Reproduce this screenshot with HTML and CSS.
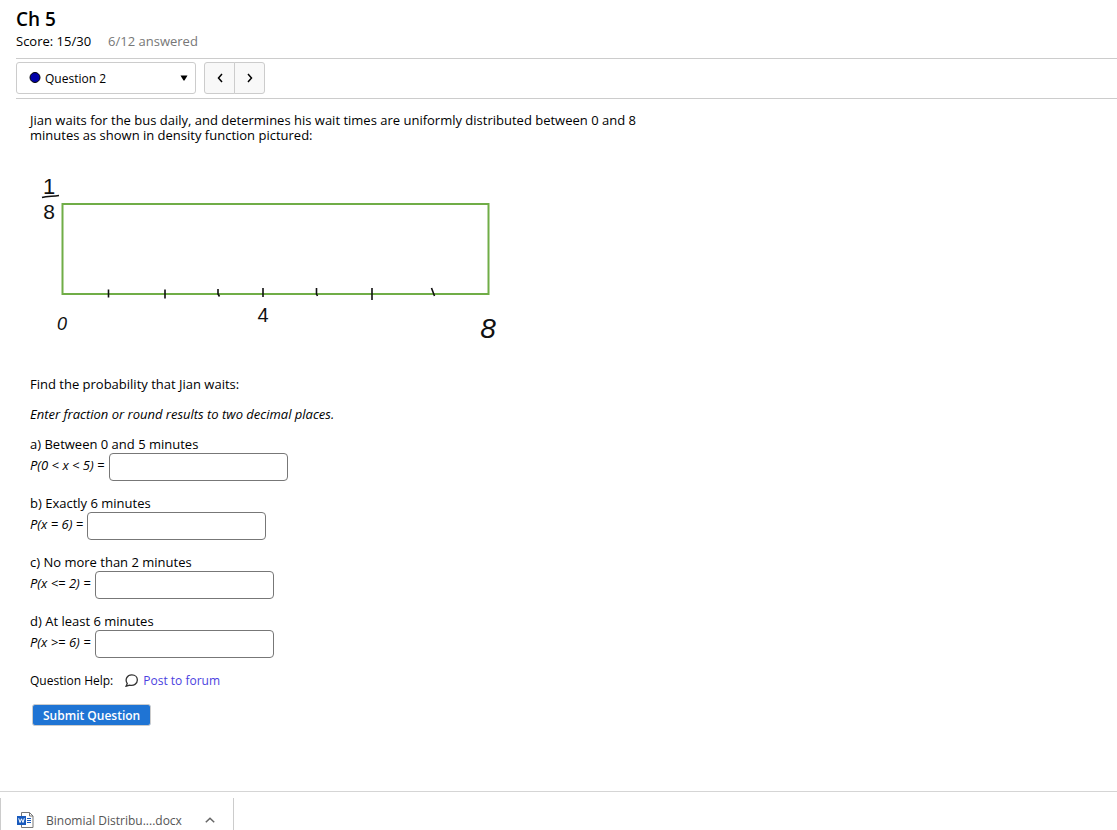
FILE: index.html
```html
<!DOCTYPE html>
<html lang="en">
<head>
<meta charset="UTF-8">
<meta name="viewport" content="width=device-width, initial-scale=1.0">
<title>Ch 5</title>
<link rel="stylesheet" href="styles.css">
</head>
<body>
    <main class="assess">
        <h1>Ch 5</h1>
        <div class="score">
            <span>Score: 15/30</span>
            <span class="answered">6/12 answered</span>
        </div>

        <div class="question-nav">
            <div class="question-select">
                <svg class="dot" width="12" height="12" viewBox="0 0 12 12"><circle cx="6" cy="5.500" r="5" fill="#0000a8" stroke="#000" /></svg>
                <select aria-label="Question">
                    <option>Question 2</option>
                </select>
                <svg class="arrow" width="8" height="6" viewBox="0 0 8 6"><path d="M.5 .5h7L4.500 5.500h-1z" /></svg>
            </div>
            <div class="nav-buttons">
                <button type="button" aria-label="Previous question"><svg width="6" height="10" viewBox="0 0 6 10"><path d="M5 1L1.500 5L5 9" /></svg></button>
                <button type="button" aria-label="Next question"><svg width="6" height="10" viewBox="0 0 6 10"><path d="M1 1L4.500 5L1 9" /></svg></button>
            </div>
        </div>

        <form class="question">
            <p class="intro">Jian waits for the bus daily, and determines his wait times are uniformly distributed between 0 and 8 minutes as shown in density function pictured:</p>

            <!-- density function, height 1/8 from 0 to 8 -->
            <svg class="graph" width="480" height="190" viewBox="0 0 480 190">
                <rect x="32.500" y="44" width="426" height="90" class="density" />
                <g class="ticks">
                    <path d="M78.500 129.500v8M135 129.500v9M188 129v5l1.500 2.500M233 128v9M286.500 128v6l1 2M342 128v12M401.500 128l3 8" />
                    <path d="M12 37.500C17 36 22 36.500 29 35.500" />
                </g>
                <g class="hand">
                    <text x="19" y="34" font-size="22">1</text>
                    <text x="19" y="59" font-size="21">8</text>
                    <text x="32" y="170" font-size="18" font-style="italic">0</text>
                    <text x="233" y="162" font-size="20">4</text>
                    <text x="458" y="178" font-size="28" font-style="italic">8</text>
                </g>
            </svg>

            <p class="find">Find the probability that Jian waits:</p>
            <p class="hint">Enter fraction or round results to two decimal places.</p>

            <div class="part">
                <div>a) Between 0 and 5 minutes</div>
                <div class="answer"><label for="qn0">P(0 &lt; x &lt; 5) =</label><input type="text" id="qn0"></div>
            </div>
            <div class="part">
                <div>b) Exactly 6 minutes</div>
                <div class="answer"><label for="qn1">P(x = 6) =</label><input type="text" id="qn1"></div>
            </div>
            <div class="part">
                <div>c) No more than 2 minutes</div>
                <div class="answer"><label for="qn2">P(x &lt;= 2) =</label><input type="text" id="qn2"></div>
            </div>
            <div class="part">
                <div>d) At least 6 minutes</div>
                <div class="answer"><label for="qn3">P(x &gt;= 6) =</label><input type="text" id="qn3"></div>
            </div>

            <div class="help">
                <span>Question Help:</span>
                <a href="#forum">
                    <svg width="13" height="13" viewBox="0 0 12 12"><path d="M1 11.300L2.100 8.800C-.4 5 2 .8 6.300.8C9.500.8 11.400 3 11.400 5.500C11.400 9 8 11.200 4.300 10.300Z" /></svg>
                    Post to forum
                </a>
            </div>

            <button type="button" class="submit">Submit Question</button>
        </form>
    </main>

    <footer class="downloads">
        <div class="download">
            <svg width="17" height="16" viewBox="0 0 17 16">
                <path d="M4.500 .5H12.500L16 4V15.500H4.500Z" fill="#fff" stroke="#777" />
                <path d="M12.500 .5V4H16" fill="none" stroke="#777" />
                <path d="M10 6.500h4M10 8.500h4M10 10.500h4" stroke="#185abd" />
                <rect y="4" width="9" height="9" fill="#185abd" />
                <path d="M1.700 6.300L3 10.500L4.500 6.800L6 10.500L7.300 6.300" fill="none" stroke="#fff" />
            </svg>
            <a href="#download">Binomial Distribu....docx</a>
            <button type="button" aria-label="Download options"><svg width="10" height="6" viewBox="0 0 10 6"><path d="M.8 5.300L5 1.200L9.200 5.300" /></svg></button>
        </div>
    </footer>
</body>
</html>
```
FILE: styles.css
```css
* {
    box-sizing: border-box;
}

body {
    margin: 0;
    min-height: 100vh;
    display: flex;
    flex-direction: column;
    background-color: #fff;
    color: #000;
    font-family: "Open Sans", sans-serif;
    font-size: 13px;
    line-height: 15px;
}

h1,
p {
    margin: 0;
}

input,
select,
button {
    font: inherit;
    color: inherit;
}

a {
    text-decoration: none;
}

.assess {
    flex: 1;
    padding: 7px 0 16px 16px;
}

h1 {
    font-size: 19px;
    font-weight: 600;
    line-height: 24px;
}

.score {
    display: flex;
    gap: 17px;
    padding: 3px 0 9px;
}

.answered {
    color: #777;
}

.question-nav {
    display: flex;
    gap: 8px;
    padding: 3px 0 4px;
    border-top: 1px solid #ccc;
    border-bottom: 1px solid #ccc;
}

.question-select {
    display: flex;
    align-items: center;
    width: 180px;
    height: 32px;
    padding: 0 7px 0 12px;
    border: 1px solid #ccc;
    border-radius: 3px;
}

.question-select select {
    flex: 1;
    padding: 0 4px;
    border: 0;
    background: none;
    font-size: 12px;
    appearance: none;
}

.nav-buttons {
    display: flex;
}

.nav-buttons button {
    display: flex;
    align-items: center;
    justify-content: center;
    width: 31px;
    padding: 0;
    border: 1px solid #ccc;
    border-radius: 3px 0 0 3px;
    background-color: #f8f8f8;
}

.nav-buttons button + button {
    margin-left: -1px;
    border-radius: 0 3px 3px 0;
}

.nav-buttons path,
.download button path {
    fill: none;
    stroke: #000;
    stroke-width: 1.5;
}

.question {
    padding: 14px;
}

.intro {
    max-width: 620px;
}

.graph {
    display: block;
    margin: 17px 0 27px;
}

.density {
    fill: none;
    stroke: #70ad47;
    stroke-width: 2;
}

.ticks path {
    fill: none;
    stroke: #111;
    stroke-width: 1.6;
}

.hand {
    font-family: "Liberation Sans", sans-serif;
    text-anchor: middle;
    fill: #111;
}

.hint {
    margin: 15px 0;
    font-style: italic;
}

.part {
    margin-bottom: 15px;
}

.answer {
    display: flex;
    gap: 4px;
}

.answer label {
    padding-top: 6px;
    font-style: italic;
}

.answer input {
    width: 179px;
    height: 28px;
    margin-top: 1px;
    padding: 2px 6px;
    border: 1px solid #777;
    border-radius: 4px;
}

.help {
    display: flex;
    gap: 12px;
    margin-bottom: 16px;
    font-size: 12px;
}

.help a {
    display: flex;
    align-items: center;
    gap: 5px;
    color: #4b3fe0;
}

.help path {
    fill: none;
    stroke: #333;
    stroke-width: 1.2;
}

.submit {
    height: 22px;
    margin-left: 2px;
    padding: 0 10px;
    border: 1px solid #ccc;
    border-radius: 3px;
    background-color: #1f74d4;
    color: #fff;
    font-size: 12px;
    font-weight: 600;
}

.downloads {
    height: 39px;
    padding-top: 6px;
    border-top: 1px solid #d5d5d5;
    font-size: 12px;
    overflow: hidden;
}

.download {
    display: flex;
    align-items: center;
    width: 234px;
    height: 44px;
    padding: 0 18px 0 16px;
    border: solid #ccc;
    border-width: 0 1px;
}

.download a {
    flex: 1;
    padding-left: 12px;
    color: #555;
}

.download button {
    display: flex;
    padding: 0;
    border: 0;
    background: none;
}

.download button path {
    stroke: #666;
}
```
